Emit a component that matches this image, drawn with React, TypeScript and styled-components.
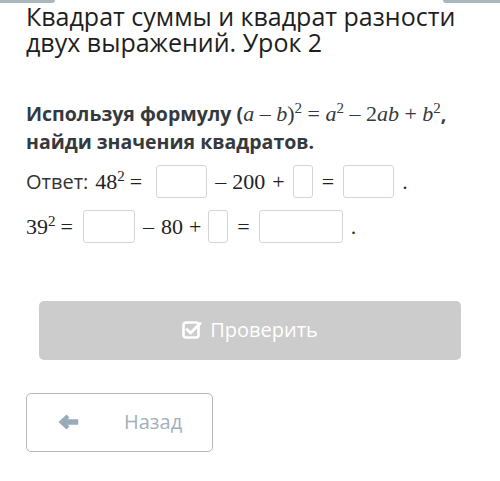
import React from 'react';
import styled, { createGlobalStyle } from 'styled-components';

const GlobalStyle = createGlobalStyle`
  html, body {
    margin: 0;
    padding: 0;
    background: #fff;
  }
  body {
    font-family: "Open Sans", "Noto Sans", sans-serif;
    color: #222;
  }
`;

const Page = styled.div`
  width: 500px;
  height: 481px;
  overflow: hidden;
  display: flex;
  flex-direction: column;
`;

const TopEdge = styled.div`
  display: flex;
  justify-content: space-between;
  height: 3px;
`;

const EdgePiece = styled.div<{ $side: 'left' | 'right' }>`
  width: ${(p) => (p.$side === 'left' ? '55px' : '57px')};
  height: 3px;
  background: #aab7bd;
  border-radius: ${(p) => (p.$side === 'left' ? '0 0 4px 0' : '0 0 0 4px')};
`;

const Content = styled.div`
  padding: 0 26px;
`;

const Title = styled.h1`
  margin: 0;
  font-size: 25px;
  font-weight: 400;
  line-height: 26px;
  color: #1e1e1e;
`;

const Task = styled.p`
  margin: 45px 0 0;
  font-size: 19.5px;
  font-weight: 700;
  line-height: 28px;
  color: #34393e;
`;

const Math = styled.span`
  font-family: "Liberation Serif", serif;
  font-weight: 400;
  font-size: 22px;
`;

const Var = styled.i`
  font-family: "Liberation Serif", serif;
  font-style: italic;
  font-size: 22px;
`;

const Sup = styled.sup`
  font-size: 15px;
  line-height: 0;
  vertical-align: 8px;
`;

const Answer = styled.div`
  margin-top: 9px;
  display: flex;
  flex-direction: column;
  gap: 12px;
`;

const Row = styled.div`
  display: flex;
  align-items: center;
  height: 33px;
  font-size: 20px;
  color: #333;
`;

const Label = styled.span`
  margin-right: 7px;
`;

const Num = styled.span`
  font-family: "Liberation Serif", serif;
  font-size: 22px;
  color: #222;
  white-space: pre;
`;

const Op = styled.span<{ $l?: number; $r?: number }>`
  font-family: "Liberation Serif", serif;
  font-size: 22px;
  color: #222;
  margin: 0 ${(p) => p.$r ?? 6}px 0 ${(p) => p.$l ?? 6}px;
`;

const Box = styled.span<{ $w: number }>`
  display: inline-block;
  box-sizing: border-box;
  width: ${(p) => p.$w}px;
  height: 33px;
  border: 1px solid #d3d6d8;
  border-radius: 3px;
  background: #fff;
`;

const Dot = styled.span`
  font-family: "Liberation Serif", serif;
  font-size: 22px;
  margin-left: 8px;
`;

const CheckButton = styled.button`
  margin: 58px 39px 0;
  height: 59px;
  border: none;
  border-radius: 5px;
  background: #cccccc;
  color: #fff;
  font-family: "Open Sans", sans-serif;
  font-size: 20px;
  display: flex;
  align-items: center;
  justify-content: center;
  gap: 8px;
  padding: 0 0 2px;
`;

const BackButton = styled.button`
  margin: 33px 0 0 26px;
  width: 187px;
  height: 59px;
  box-sizing: border-box;
  border: 1px solid #b4b9bc;
  border-radius: 5px;
  background: #fff;
  color: #a3b0b9;
  font-family: "Open Sans", sans-serif;
  font-size: 20px;
  display: flex;
  align-items: center;
  padding: 0 0 2px 31px;
`;

const BackText = styled.span`
  margin-left: 45px;
`;

const CheckIcon = () => (
  <svg width="20" height="20" viewBox="0 0 20 20">
    <rect x="1.5" y="2.5" width="15" height="15" rx="2.5" fill="none" stroke="#fff" strokeWidth="2.6" />
    <path d="M5 9.5 L8.5 13 L18 3.5" fill="none" stroke="#fff" strokeWidth="3" strokeLinecap="round" strokeLinejoin="round" />
  </svg>
);

const ArrowIcon = () => (
  <svg width="21" height="16" viewBox="0 0 21 16">
    <path d="M1.5 8 L8.5 1.5 L10.5 3.5 L7.5 6 H19.5 V10 H7.5 L10.5 12.5 L8.5 14.5 Z" fill="#99abb8" stroke="#99abb8" strokeWidth="1.5" strokeLinejoin="round" />
  </svg>
);

const App: React.FC = () => {
  return (
    <Page>
      <GlobalStyle />
      <TopEdge>
        <EdgePiece $side="left" />
        <EdgePiece $side="right" />
      </TopEdge>
      <Content>
        <Title>
          Квадрат суммы и квадрат разности двух выражений. Урок 2
        </Title>
        <Task>
          Используя формулу (
          <Math>
            <Var>a</Var> – <Var>b</Var>)<Sup>2</Sup> = <Var>a</Var>
            <Sup>2</Sup> – 2<Var>ab</Var> + <Var>b</Var>
            <Sup>2</Sup>
          </Math>
          , найди значения квадратов.
        </Task>
        <Answer>
          <Row>
            <Label>Ответ:</Label>
            <Num>
              48<Sup>2</Sup>
            </Num>
            <Op $l={5} $r={14}>=</Op>
            <Box $w={51} />
            <Op $l={8} $r={6}>–</Op>
            <Num>200</Num>
            <Op $l={7} $r={8}>+</Op>
            <Box $w={20} />
            <Op $l={9} $r={9}>=</Op>
            <Box $w={51} />
            <Dot>.</Dot>
          </Row>
          <Row>
            <Num>
              39<Sup>2</Sup>
            </Num>
            <Op $l={5} $r={10}>=</Op>
            <Box $w={52} />
            <Op $l={8} $r={7}>–</Op>
            <Num>80</Num>
            <Op $l={6} $r={7}>+</Op>
            <Box $w={20} />
            <Op $l={9} $r={9}>=</Op>
            <Box $w={84} />
            <Dot>.</Dot>
          </Row>
        </Answer>
      </Content>
      <CheckButton>
        <CheckIcon />
        Проверить
      </CheckButton>
      <BackButton>
        <ArrowIcon />
        <BackText>Назад</BackText>
      </BackButton>
    </Page>
  );
};

export default App;
